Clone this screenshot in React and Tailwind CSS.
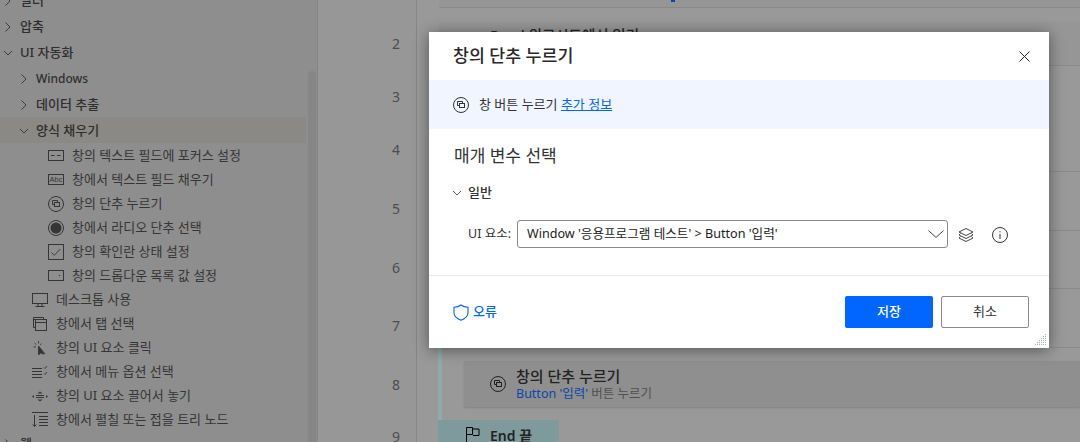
function ButtonIcon({ className }) {
  return (
    <svg viewBox="0 0 16 16" fill="none" stroke="currentColor" strokeWidth="1" className={className}>
      <circle cx="8" cy="8" r="7.5" />
      <path d="M9.5 6.5V4.500H4.500V8.500H6.500" />
      <rect x="6.5" y="6.5" width="5" height="4" />
    </svg>
  )
}

function ChevronRightLine() {
  return (
    <svg viewBox="0 0 16 16" fill="none" stroke="currentColor" className="w-4 h-4 shrink-0 mr-[4px] text-[#3a3a3a]">
      <path d="M5.500 3.500L10 8l-4.500 4.500" />
    </svg>
  )
}

function ChevronDownLine({ className }) {
  return (
    <svg viewBox="0 0 16 16" fill="none" stroke="currentColor" className={className}>
      <path d="M4 6l4 4 4-4" />
    </svg>
  )
}

function FieldIcon() {
  return (
    <svg viewBox="0 0 16 16" fill="none" stroke="currentColor" className="w-4 h-4">
      <rect x=".5" y="2.5" width="15" height="10" />
      <path d="M3 7.5h3.500M9 7.5h3.500" />
    </svg>
  )
}

function AbcIcon() {
  return (
    <svg viewBox="0 0 16 16" fill="none" stroke="currentColor" className="w-4 h-4">
      <rect x=".5" y="2.5" width="15" height="10" />
      <text x="8" y="10" textAnchor="middle" fontSize="7.500" fontFamily="Liberation Sans" fill="currentColor" stroke="none">Abc</text>
    </svg>
  )
}

function RadioIcon() {
  return (
    <svg viewBox="0 0 16 16" fill="none" stroke="currentColor" className="w-4 h-4">
      <circle cx="8" cy="8" r="7.5" />
      <circle cx="8" cy="8" r="5.5" fill="currentColor" stroke="none" />
    </svg>
  )
}

function CheckIcon() {
  return (
    <svg viewBox="0 0 16 16" fill="none" stroke="currentColor" className="w-4 h-4">
      <rect x=".5" y=".5" width="15" height="15" />
      <path d="M3.500 8.500l2.800 2.800 6-6.300" strokeWidth=".9" />
    </svg>
  )
}

function DropIcon() {
  return (
    <svg viewBox="0 0 16 16" fill="none" stroke="currentColor" className="w-4 h-4">
      <rect x=".5" y="2.5" width="15" height="10" />
      <path d="M10.500 7h2l-1 1.200z" fill="currentColor" stroke="none" />
    </svg>
  )
}

function DesktopIcon() {
  return (
    <svg viewBox="0 0 16 16" fill="none" stroke="currentColor" className="w-4 h-4">
      <rect x=".5" y="1.5" width="15" height="10" />
      <path d="M6 11.500v2.500M10 11.500v2.500M3.500 14.500h9" />
    </svg>
  )
}

function TabIcon() {
  return (
    <svg viewBox="0 0 16 16" fill="none" stroke="currentColor" className="w-4 h-4">
      <path d="M3.500 11.500h-2v-10h10v2" />
      <path d="M1.500 3.500h10" />
      <rect x="3.500" y="3.500" width="11" height="11" />
      <path d="M3.500 6.500h11" />
    </svg>
  )
}

function ClickIcon() {
  return (
    <svg viewBox="0 0 16 16" fill="none" stroke="currentColor" strokeWidth=".9" className="w-4 h-4">
      <path d="M6.500 6v9l2-2 1 .2 1 .6h2.300L6.500 6z" fill="currentColor" />
      <path d="M6.500 1v2.500M2.500 3l1.800 1.500M1.500 7H4M9.500 3.500L8.300 5" />
    </svg>
  )
}

function MenuIcon() {
  return (
    <svg viewBox="0 0 16 16" fill="none" stroke="currentColor" className="w-4 h-4">
      <path d="M0 4.500h10M0 7.500h10M0 10.500h10M0 13.500h10" />
      <path d="M12 3.500l1 1 2-2.500M12 9.500l1 1 2-2.500" strokeWidth=".9" />
    </svg>
  )
}

function DragIcon() {
  return (
    <svg viewBox="0 0 16 16" fill="none" stroke="currentColor" className="w-4 h-4">
      <path d="M4 7.500h8M4 9.500h8" />
      <path d="M8 3.500l2.500 2h-5zM8 13.500l2.500-2h-5zM0 8.500l2-1.500v3zM16 8.500l-2-1.500v3z" fill="currentColor" stroke="none" />
    </svg>
  )
}

function TreeIcon() {
  return (
    <svg viewBox="0 0 16 16" fill="none" stroke="currentColor" className="w-4 h-4">
      <path d="M0 .500h16M7 4.500h9M7 7.500h9M7 10.500h9M7 13.500h9" />
      <path d="M2.500 3v11.500M.800 12.500l1.700 2 1.700-2" />
    </svg>
  )
}

function FlagIcon() {
  return (
    <svg viewBox="0 0 14 16" fill="none" stroke="currentColor" className="w-[14px] h-4">
      <path d="M.500 16V.500h6v1.500h6.500v6.500H7" />
      <path d="M6.500.500V7.500H.500" />
    </svg>
  )
}

function ShieldIcon() {
  return (
    <svg viewBox="0 0 16 17" fill="none" stroke="currentColor" strokeWidth="1.100" className="w-4 h-[17px]">
      <path d="M8 1c1.700 1.400 4 2.200 7 2.300v5.200c0 3.300-2.300 6-7 7.800-4.700-1.800-7-4.500-7-7.800V3.300C4 3.200 6.300 2.400 8 1z" />
    </svg>
  )
}

function LayersIcon() {
  return (
    <svg viewBox="0 0 16 16" fill="none" stroke="currentColor" className="w-4 h-4">
      <path d="M8 1.500l7 3.500-7 3.500L1 5z" />
      <path d="M2.500 6.500L1 8l7 3.500L15 8l-1.500-1.500" />
      <path d="M2.500 9.500L1 11l7 3.500 7-3.500-1.500-1.500" />
    </svg>
  )
}

function InfoIcon() {
  return (
    <svg viewBox="0 0 16 16" fill="none" stroke="currentColor" className="w-4 h-4">
      <circle cx="8" cy="8" r="7.500" />
      <path d="M8 7v5" />
      <path d="M8 4.200v1.200" />
    </svg>
  )
}

const topRows = [
  { label: '일러', open: false },
  { label: '압축', open: false },
  { label: 'UI 자동화', open: true },
]

const formItems = [
  { label: '창의 텍스트 필드에 포커스 설정', icon: <FieldIcon /> },
  { label: '창에서 텍스트 필드 채우기', icon: <AbcIcon /> },
  { label: '창의 단추 누르기', icon: <ButtonIcon className="w-4 h-4" /> },
  { label: '창에서 라디오 단추 선택', icon: <RadioIcon /> },
  { label: '창의 확인란 상태 설정', icon: <CheckIcon /> },
  { label: '창의 드롭다운 목록 값 설정', icon: <DropIcon /> },
]

const uiItems = [
  { label: '데스크톱 사용', icon: <DesktopIcon /> },
  { label: '창에서 탭 선택', icon: <TabIcon /> },
  { label: '창의 UI 요소 클릭', icon: <ClickIcon /> },
  { label: '창에서 메뉴 옵션 선택', icon: <MenuIcon /> },
  { label: '창의 UI 요소 끌어서 놓기', icon: <DragIcon /> },
  { label: '창에서 펼칠 또는 접을 트리 노드', icon: <TreeIcon /> },
]

const lineNumbers = [
  { n: 2, cls: 'h-[54px]' },
  { n: 3, cls: 'h-[52px]' },
  { n: 4, cls: 'h-[54px]' },
  { n: 5, cls: 'h-[64px]' },
  { n: 6, cls: 'h-[54px]' },
  { n: 7, cls: 'h-[62px]' },
  { n: 8, cls: 'h-[56px]' },
  { n: 9, cls: 'h-[48px]' },
]

function Sidebar() {
  return (
    <div className="relative w-[318px] shrink-0 h-full bg-[#8e8e8e] border-r border-[#848484] overflow-hidden text-[#2e2e2e] text-[13px]">
      <div className="-mt-[13px]">
        {topRows.map(row => (
          <div key={row.label} className="h-[26px] flex items-center pt-[2px] font-medium">
            {row.open
              ? <ChevronDownLine className="w-4 h-4 shrink-0 mr-[4px] text-[#3a3a3a]" />
              : <ChevronRightLine />}
            {row.label}
          </div>
        ))}
        <div className="h-[26px] flex items-center pl-[16px] pt-[2px] font-medium text-[12px]">
          <ChevronRightLine />
          Windows
        </div>
        <div className="h-[26px] flex items-center pl-[16px] pt-[2px] font-medium">
          <ChevronRightLine />
          데이터 추출
        </div>
        <div className="h-[26px] w-[306px] flex items-center pl-[16px] pt-[2px] font-medium bg-[#8b8985]">
          <ChevronDownLine className="w-4 h-4 shrink-0 mr-[4px] text-[#3a3a3a]" />
          양식 채우기
        </div>
        {formItems.map(item => (
          <div key={item.label} className="h-[24px] flex items-center pl-[48px] pt-[2px] gap-[8px] text-[#353535]">
            {item.icon}
            {item.label}
          </div>
        ))}
        {uiItems.map(item => (
          <div key={item.label} className="h-[24px] flex items-center pl-[32px] pt-[2px] gap-[8px] text-[#353535]">
            {item.icon}
            {item.label}
          </div>
        ))}
        <div className="h-[26px] flex items-center font-medium">
          <ChevronRightLine />
          웹
        </div>
      </div>
      <div className="absolute left-[308px] top-[71px] bottom-0 w-[8px] rounded-t-full bg-[#868686]" />
    </div>
  )
}

function Flow() {
  return (
    <div className="flex-1 min-w-0 flex flex-col bg-[#999999]">
      <div className="h-[8px] ml-[1px] border-b border-[#8a8a8a] bg-[#969696] pl-[232px]">
        <div className="w-1 h-[2px] bg-[#0b47a8]" />
      </div>
      <div className="h-[14px]" />
      <div className="h-[44px] ml-[1px] border-b border-[#8a8a8a] bg-[#969696] pl-[51px] pt-[3px] text-[14.500px] font-medium text-[#222222]">
        Read 워크시트에서 읽기
      </div>
      <div className="h-[106px] border-b border-[#8a8a8a]" />
      <div className="h-[59px] border-b border-[#8a8a8a]" />
      <div className="h-[58px] border-b border-[#8a8a8a]" />
      <div className="h-[59px] border-b border-[#8a8a8a]" />
      <div className="h-[72px] border-l-4 border-[#92aaac] pl-[22px] pt-[13px]">
        <div className="h-[46px] bg-[#8f8f8f] rounded-l-[2px] shadow-[0_1px_2px_rgba(0,0,0,0.15)] pl-[26px] flex items-center gap-[10px]">
          <ButtonIcon className="w-4 h-4 text-[#222222]" />
          <div className="flex flex-col">
            <span className="text-[15px] leading-[18px] font-medium text-[#222222]">창의 단추 누르기</span>
            <span className="text-[12.500px] leading-[17px] text-[#505050]">
              <span className="text-[#0b47a8]">Button '입력'</span> 버튼 누르기
            </span>
          </div>
        </div>
      </div>
      <div className="h-[22px] w-[121px] bg-[#7f9a9c] flex items-start pl-[28px] pt-[7px] gap-[10px] overflow-hidden">
        <FlagIcon />
        <span className="text-[14px] leading-[16px] mt-[1px] font-semibold text-[#222222]">End 끝</span>
      </div>
    </div>
  )
}

function Modal() {
  return (
    <div className="absolute left-[429px] top-[32px] w-[620px] h-[316px] bg-white flex flex-col shadow-[0_2px_14px_rgba(0,0,0,0.45)] text-[#333333]">
      <div className="h-[48px] shrink-0 flex items-center justify-between pl-[24px] pr-[19px]">
        <span className="text-[17.300px] font-medium text-[#292929]">창의 단추 누르기</span>
        <svg viewBox="0 0 11 11" fill="none" stroke="#222222" className="w-[11px] h-[11px]">
          <path d="M.500.500l10 10M10.500.500l-10 10" />
        </svg>
      </div>
      <div className="h-[49px] shrink-0 bg-[#f0f5ff] flex items-center pl-[24px] gap-[10px] text-[13px]">
        <ButtonIcon className="w-4 h-4 text-[#333333]" />
        <span>
          창 버튼 누르기 <span className="text-[#0066ff] underline">추가 정보</span>
        </span>
      </div>
      <div className="text-[17px] pl-[25px] pt-[15px] leading-[24px]">매개 변수 선택</div>
      <div className="flex items-center pl-[20px] mt-[15px] h-[20px] text-[13px] font-medium">
        <ChevronDownLine className="w-4 h-4 mr-[3px] text-[#555555]" />
        일반
      </div>
      <div className="flex items-center mt-[17px] pl-[39px] h-[28px]">
        <span className="text-[12.500px] w-[49px]">UI 요소:</span>
        <div className="w-[431px] h-[28px] border border-[#8a8a8a] rounded-[3px] flex items-center justify-between pl-[9px] pr-[3px] text-[12.600px] text-[#222222]">
          <span>Window '응용프로그램 테스트' &gt; Button '입력'</span>
          <svg viewBox="0 0 16 8" fill="none" stroke="#444444" className="w-4 h-2">
            <path d="M.500.500l7.500 7 7.500-7" />
          </svg>
        </div>
        <div className="ml-[10px] mt-[1px] text-[#444444]"><LayersIcon /></div>
        <div className="ml-[18px] mt-[1px] text-[#333333]"><InfoIcon /></div>
      </div>
      <div className="mt-[27px] border-t border-[#e8e8e8] flex-1 flex items-center justify-between pl-[24px] pr-[20px]">
        <div className="flex items-center gap-[4px] text-[#0066ff] text-[13px] font-medium">
          <ShieldIcon />
          오류
        </div>
        <div className="flex gap-[8px] text-[13px]">
          <div className="w-[88px] h-[32px] bg-[#0066ff] text-white font-medium rounded-[2px] flex items-center justify-center">저장</div>
          <div className="w-[88px] h-[32px] border border-[#8a8a8a] rounded-[2px] flex items-center justify-center">취소</div>
        </div>
      </div>
      <svg viewBox="0 0 12 12" className="absolute right-[2px] bottom-[2px] w-[12px] h-[12px] text-[#a9b4c6]" fill="currentColor">
        <rect x="10" y="0" width="1" height="1" /><rect x="10" y="2" width="1" height="1" /><rect x="10" y="4" width="1" height="1" /><rect x="10" y="6" width="1" height="1" /><rect x="10" y="8" width="1" height="1" /><rect x="10" y="10" width="1" height="1" />
        <rect x="8" y="2" width="1" height="1" /><rect x="8" y="4" width="1" height="1" /><rect x="8" y="6" width="1" height="1" /><rect x="8" y="8" width="1" height="1" /><rect x="8" y="10" width="1" height="1" />
        <rect x="6" y="4" width="1" height="1" /><rect x="6" y="6" width="1" height="1" /><rect x="6" y="8" width="1" height="1" /><rect x="6" y="10" width="1" height="1" />
        <rect x="4" y="6" width="1" height="1" /><rect x="4" y="8" width="1" height="1" /><rect x="4" y="10" width="1" height="1" />
        <rect x="2" y="8" width="1" height="1" /><rect x="2" y="10" width="1" height="1" />
        <rect x="0" y="10" width="1" height="1" />
      </svg>
    </div>
  )
}

export default function App() {
  return (
    <div className="relative w-[1080px] h-[442px] overflow-hidden flex font-['Noto_Sans','Noto_Sans_CJK_KR',sans-serif]">
      <Sidebar />
      <div className="w-[99px] shrink-0 h-full bg-[#979797] border-r border-[#868686] pt-[16px] pr-[16px] flex flex-col items-end text-[14px] text-[#4d4d4d]">
        {lineNumbers.map(line => (
          <div key={line.n} className={`${line.cls} shrink-0 flex items-center`}>{line.n}</div>
        ))}
      </div>
      <div className="w-[21px] shrink-0 bg-[#999999]" />
      <Flow />
      <Modal />
    </div>
  )
}
